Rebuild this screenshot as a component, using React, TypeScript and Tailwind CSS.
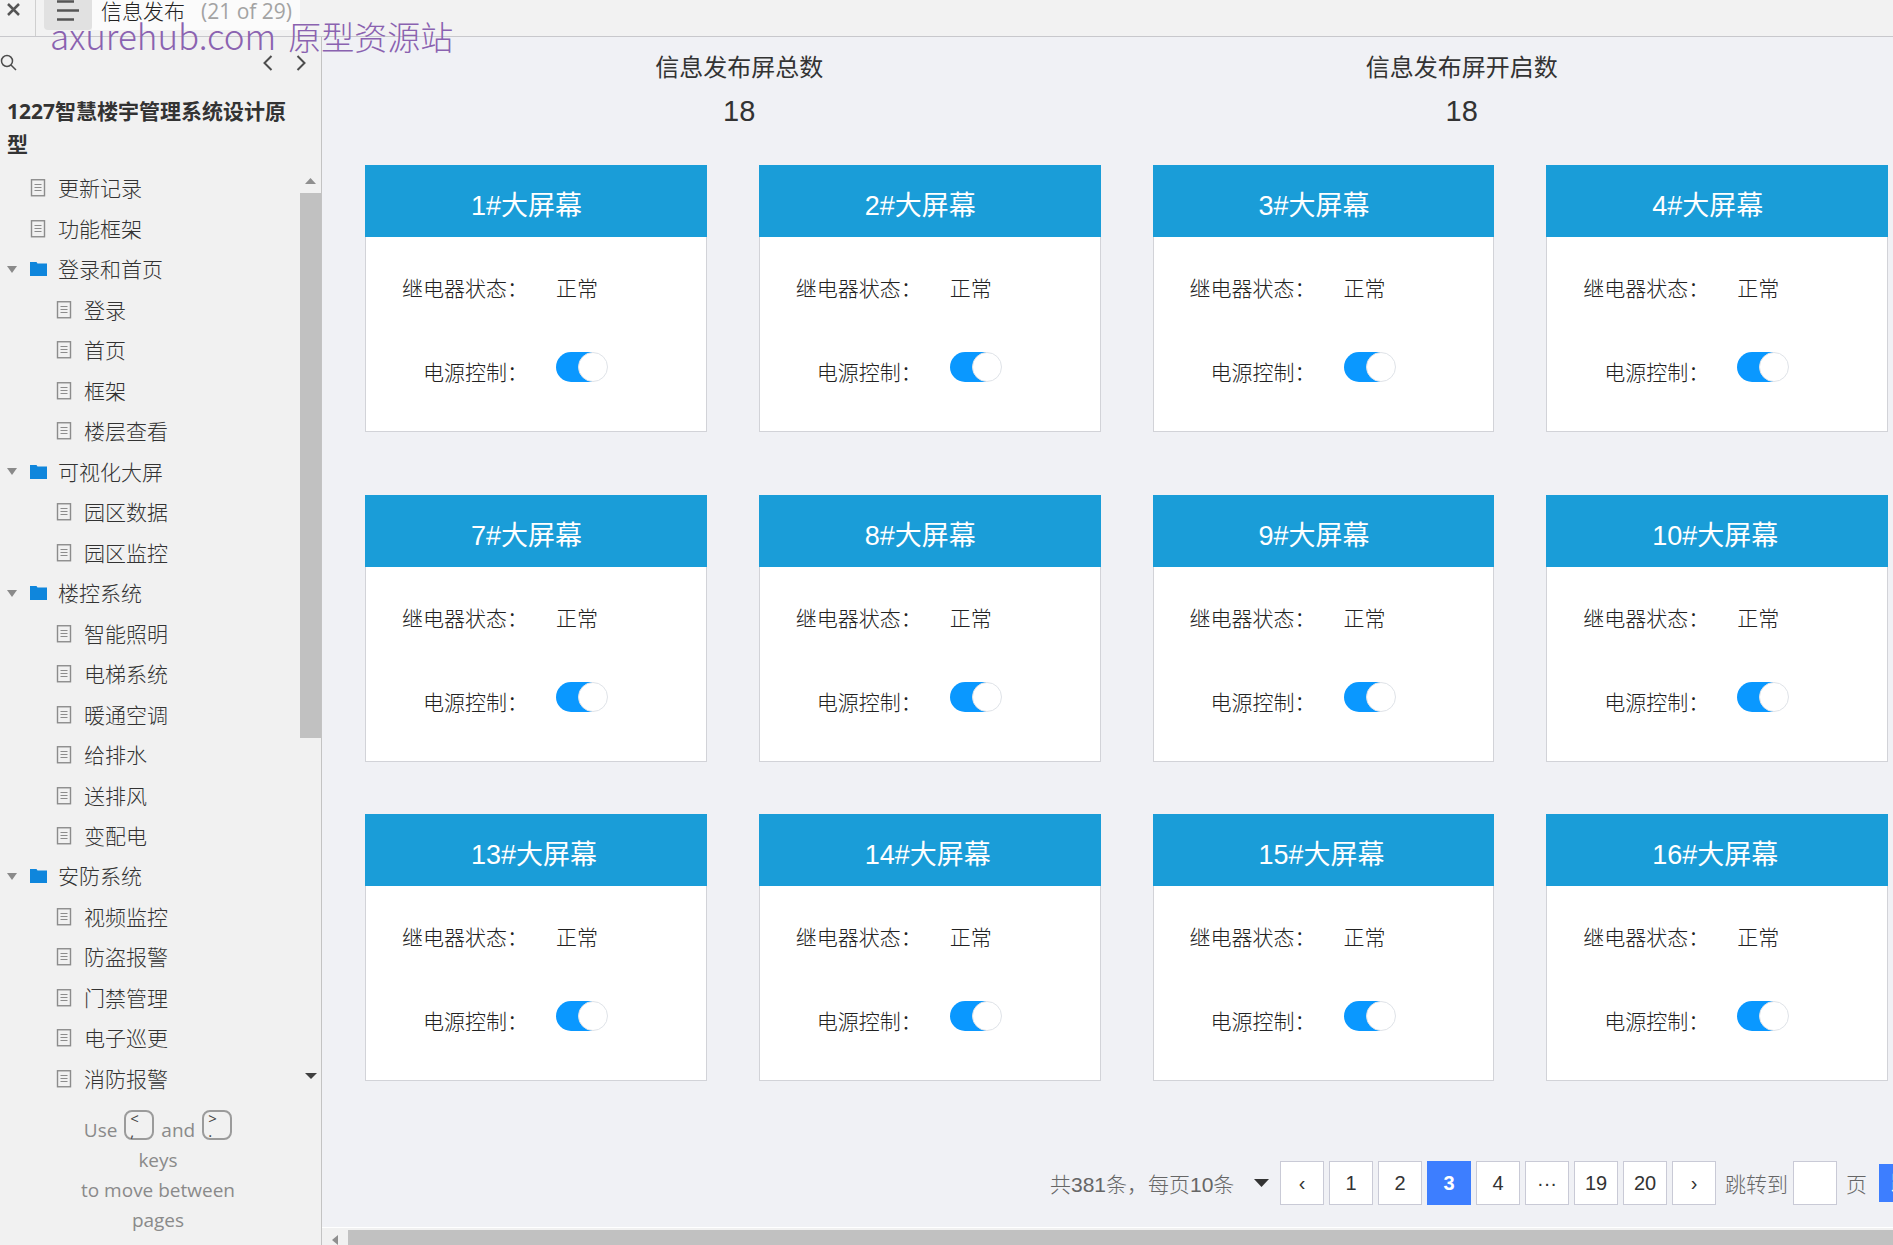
import { useState } from "react";

type TreeItem = { label: string; kind: "page" | "folder"; depth: 0 | 1 };

const TREE: TreeItem[] = [
  { label: "更新记录", kind: "page", depth: 0 },
  { label: "功能框架", kind: "page", depth: 0 },
  { label: "登录和首页", kind: "folder", depth: 0 },
  { label: "登录", kind: "page", depth: 1 },
  { label: "首页", kind: "page", depth: 1 },
  { label: "框架", kind: "page", depth: 1 },
  { label: "楼层查看", kind: "page", depth: 1 },
  { label: "可视化大屏", kind: "folder", depth: 0 },
  { label: "园区数据", kind: "page", depth: 1 },
  { label: "园区监控", kind: "page", depth: 1 },
  { label: "楼控系统", kind: "folder", depth: 0 },
  { label: "智能照明", kind: "page", depth: 1 },
  { label: "电梯系统", kind: "page", depth: 1 },
  { label: "暖通空调", kind: "page", depth: 1 },
  { label: "给排水", kind: "page", depth: 1 },
  { label: "送排风", kind: "page", depth: 1 },
  { label: "变配电", kind: "page", depth: 1 },
  { label: "安防系统", kind: "folder", depth: 0 },
  { label: "视频监控", kind: "page", depth: 1 },
  { label: "防盗报警", kind: "page", depth: 1 },
  { label: "门禁管理", kind: "page", depth: 1 },
  { label: "电子巡更", kind: "page", depth: 1 },
  { label: "消防报警", kind: "page", depth: 1 },
];

const SCREEN_ROWS = [
  { screens: [1, 2, 3, 4], spacing: "mb-[63px]" },
  { screens: [7, 8, 9, 10], spacing: "mb-[52px]" },
  { screens: [13, 14, 15, 16], spacing: "mb-[80px]" },
];

const PAGES = ["‹", "1", "2", "3", "4", "···", "19", "20", "›"];

function PageIcon() {
  return (
    <svg width="17" height="18" viewBox="0 0 17 18" fill="none" stroke="#8c8c8c" aria-hidden="true">
      <rect x="1.5" y="0.75" width="13" height="16" strokeWidth="1.4" />
      <path d="M4.5 5.5h7M4.5 8.5h7M4.5 11.5h7" strokeWidth="1.2" />
    </svg>
  );
}

function FolderIcon() {
  return (
    <svg width="17" height="18" viewBox="0 0 17 18" fill="#0f86dc" aria-hidden="true">
      <path d="M0 2h6.500l1 1.500h9.500v12.500H0z" />
    </svg>
  );
}

function TreeRow({ item }: { item: TreeItem }) {
  return (
    <li className={"flex flex-1 items-center " + (item.depth === 1 ? "pl-[56px]" : "pl-[7px]")}>
      {item.depth === 0 && (
        <span className="mr-[13px] w-[10px]">
          {item.kind === "folder" && (
            <svg width="10" height="7" viewBox="0 0 10 7" fill="#8a8a8a" aria-hidden="true">
              <path d="M0 0h10L5 7z" />
            </svg>
          )}
        </span>
      )}
      <a href="#" className="flex items-center gap-[11px] text-[21px] leading-8 font-light text-[#333]">
        {item.kind === "folder" ? <FolderIcon /> : <PageIcon />}
        {item.label}
      </a>
    </li>
  );
}

function KeyCap({ top, bottom }: { top: string; bottom: string }) {
  return (
    <kbd className="mb-[5px] flex h-[30px] w-[30px] flex-col rounded-lg border-2 border-[#9b9b9b] pl-1 text-left font-[inherit] text-[15px] leading-[13px] text-[#444]">
      <span>{top}</span>
      <span>{bottom}</span>
    </kbd>
  );
}

function Sidebar() {
  return (
    <aside className="flex w-[322px] shrink-0 flex-col border-r border-[#c3c3c3] bg-[#f1f1f1] font-['Open_Sans','Noto_Sans_CJK_SC',sans-serif]">
      <div className="flex h-[51px] items-center">
        <button type="button" aria-label="Search" className="mr-auto">
          <svg width="17" height="17" viewBox="0 0 17 17" fill="none" stroke="#4d4d4d" strokeWidth="1.5">
            <circle cx="7" cy="7" r="5.500" />
            <path d="M11 11l5 5" />
          </svg>
        </button>
        <button type="button" aria-label="Previous page">
          <svg width="10" height="16" viewBox="0 0 10 16" fill="none" stroke="#4d4d4d" strokeWidth="2">
            <path d="M8.500 1L1.500 8l7 7" />
          </svg>
        </button>
        <button type="button" aria-label="Next page" className="mr-[15px] ml-[23px]">
          <svg width="10" height="16" viewBox="0 0 10 16" fill="none" stroke="#4d4d4d" strokeWidth="2">
            <path d="M1.500 1l7 7-7 7" />
          </svg>
        </button>
      </div>

      <h1 className="py-[7px] pr-6 pl-[7px] text-[21px] leading-[33px] font-bold text-[#333]">
        1227智慧楼宇管理系统设计原型
      </h1>

      <div className="flex min-h-0 flex-1">
        <ul className="flex flex-1 flex-col">
          {TREE.map((item) => (
            <TreeRow key={item.label} item={item} />
          ))}
        </ul>
        <div className="flex w-[21px] flex-col items-center pt-[10px] pb-[20px]" aria-hidden="true">
          <svg className="shrink-0" width="11" height="6" viewBox="0 0 11 6" fill="#8f8f8f">
            <path d="M5.500 0L11 6H0z" />
          </svg>
          <div className="mt-[9px] w-full flex-[13] bg-[#c1c1c1]" />
          <div className="flex-[8]" />
          <svg className="shrink-0" width="12" height="6" viewBox="0 0 12 6" fill="#404040">
            <path d="M0 0h12L6 6z" />
          </svg>
        </div>
      </div>

      <div className="pt-[11px] pr-[5px] pb-[10px] text-center text-[19px] leading-[30px] text-[#8a8a8a]">
        <p className="flex items-end justify-center gap-[7px]">
          Use <KeyCap top="<" bottom="," /> and <KeyCap top=">" bottom="." />
        </p>
        <p>keys</p>
        <p>to move between</p>
        <p>pages</p>
      </div>
    </aside>
  );
}

function Switch({ label }: { label: string }) {
  const [on, setOn] = useState(true);
  return (
    <button
      type="button"
      role="switch"
      aria-checked={on}
      aria-label={label}
      onClick={() => setOn(!on)}
      className={"flex h-[30px] w-[52px] " + (on ? "" : "flex-row-reverse")}
    >
      <span className={"h-[30px] w-9 " + (on ? "rounded-l-full bg-[#0a98ff]" : "rounded-r-full bg-gray-300")} />
      <span
        className={
          "h-[30px] w-[30px] shrink-0 rounded-full border border-[#dfe3e8] bg-white " + (on ? "-ml-[14px]" : "-mr-[14px]")
        }
      />
    </button>
  );
}

function ScreenCard({ no }: { no: number }) {
  return (
    <section className="border border-[#d2d3d8] bg-white">
      <h2 className="-mx-px -mt-px h-[72px] bg-[#1a9dd8] pt-[10px] pl-[106px] text-[27px] leading-[62px] text-white">
        {no}#大屏幕
      </h2>
      <dl className="grid h-[194px] grid-cols-[auto_1fr] content-start gap-x-[28px] gap-y-[45px] pt-[34px] pl-[36px] text-[21px] leading-9 font-light text-[#222]">
        <dt>继电器状态：</dt>
        <dd>正常</dd>
        <dt className="pt-[3px] text-right">电源控制：</dt>
        <dd>
          <Switch label={`${no}#大屏幕 电源控制`} />
        </dd>
      </dl>
    </section>
  );
}

function Pagination() {
  const [current, setCurrent] = useState("3");
  return (
    <nav className="-mr-[57px] flex items-center justify-end text-[21px] text-[#666]">
      <span className="pt-1 font-light whitespace-nowrap">共381条，</span>
      <span className="mr-[11px] flex items-center">
        <select aria-label="每页条数" className="w-[106px] shrink-0 appearance-none pt-1 font-light">
          <option>每页10条</option>
        </select>
        <svg className="pointer-events-none" width="15" height="8" viewBox="0 0 15 8" fill="#333">
          <path d="M0 0h15L7.500 8z" />
        </svg>
      </span>
      <div className="mr-[9px] flex gap-[5px]">
        {PAGES.map((p) => (
          <button
            key={p}
            type="button"
            onClick={() => setCurrent(p)}
            className={
              "h-11 w-11 shrink-0 border text-[20px] " +
              (p === current
                ? "border-[#3d7eff] bg-[#3d7eff] font-bold text-white"
                : "border-[#c9cad6] bg-white text-[#333]")
            }
          >
            {p}
          </button>
        ))}
      </div>
      <label htmlFor="jump" className="mr-[5px] pt-1 font-light whitespace-nowrap">
        跳转到
      </label>
      <input id="jump" type="text" className="mr-[9px] h-11 w-11 shrink-0 border border-[#c9cad6] bg-white text-center" />
      <span className="mr-3 pt-1 font-light">页</span>
      <button type="button" className="h-[38px] w-[66px] shrink-0 bg-[#3d7eff] text-[21px] text-white">
        跳转
      </button>
    </nav>
  );
}

export default function App() {
  return (
    <div className="flex h-screen flex-col overflow-hidden bg-[#f0f1f5] font-['Liberation_Sans','Noto_Sans_CJK_SC',sans-serif] text-[#333]">
      <header className="relative flex h-[37px] shrink-0 items-start border-b border-[#c8c8cc] bg-[#f2f2f2] font-['Open_Sans','Noto_Sans_CJK_SC',sans-serif]">
        <button type="button" aria-label="Close" className="flex h-full w-9 border-r border-[#cfcfcf] pt-[3px] pl-[7px]">
          <svg width="13" height="13" viewBox="0 0 13 13" fill="none" stroke="#555" strokeWidth="2.500">
            <path d="M1 1l11 11M12 1L1 12" />
          </svg>
        </button>
        <button type="button" aria-label="Pages" className="ml-2 h-[30px] w-12 rounded-b bg-[#e1e1e1] pl-3">
          <svg width="24" height="30" viewBox="0 0 24 30" fill="none" stroke="#555" strokeWidth="2.600">
            <path d="M1 1.500h17M1 10.500h22M1 19.500h17" />
          </svg>
        </button>
        <div className="flex h-[30px] gap-4 bg-[#fbfbfb] pr-2 pl-[9px] text-[21px] leading-[23px]">
          <span className="font-light text-[#222]">信息发布</span>
          <span className="text-[#a3a3a3]">(21 of 29)</span>
        </div>
        <span className="pointer-events-none absolute top-[12px] left-[50px] z-10 flex items-baseline gap-3 font-['Noto_Sans_CJK_SC',sans-serif] leading-[46px] font-light whitespace-nowrap text-[#8a62b0]">
          <span className="text-[35px]">axurehub.com</span>
          <span className="text-[33px]">原型资源站</span>
        </span>
      </header>

      <div className="flex min-h-0 flex-1">
        <Sidebar />

        <div className="flex min-w-0 flex-1 flex-col">
          <main className="min-h-0 flex-1 overflow-hidden pr-[5px] pl-[43px]">
            <dl className="mr-[65px] ml-[13px] grid grid-cols-2 pt-[13px] text-center">
              <div>
                <dt className="text-[24px] leading-9">信息发布屏总数</dt>
                <dd className="mt-2 text-[29px] leading-[34px]">18</dd>
              </div>
              <div>
                <dt className="text-[24px] leading-9">信息发布屏开启数</dt>
                <dd className="mt-2 text-[29px] leading-[34px]">18</dd>
              </div>
            </dl>

            <div className="mt-[37px]">
              {SCREEN_ROWS.map(({ screens, spacing }) => (
                <div key={screens[0]} className={"grid grid-cols-4 gap-[52px] " + spacing}>
                  {screens.map((no) => (
                    <ScreenCard key={no} no={no} />
                  ))}
                </div>
              ))}
            </div>

            <Pagination />
          </main>

          <div className="flex h-[18px] items-end border-t border-white bg-[#f1f1f1]" aria-hidden="true">
            <svg className="mr-[10px] ml-[10px]" width="6" height="10" viewBox="0 0 6 10" fill="#8f8f8f">
              <path d="M6 0v10L0 5z" />
            </svg>
            <div className="h-[15px] flex-1 bg-[#c1c1c1]" />
          </div>
        </div>
      </div>
    </div>
  );
}
